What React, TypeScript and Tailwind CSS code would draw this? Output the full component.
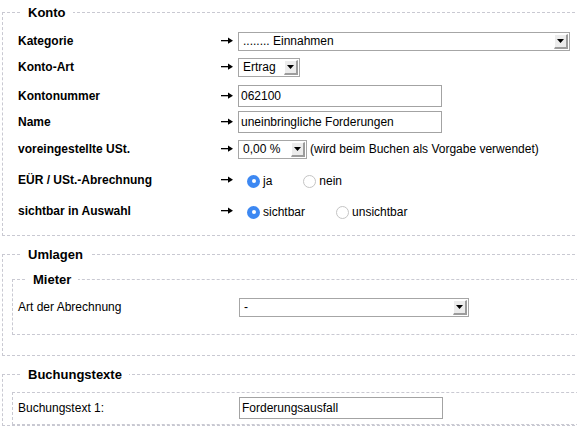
import React from "react";

const font = { fontFamily: '"Liberation Sans", Arial, Helvetica, sans-serif' };

function Arrow() {
  return (
    <svg width="12" height="7" viewBox="0 0 12 7" className="-mt-[1px]">
      <rect x="0" y="3" width="8" height="1.3" fill="#000" />
      <path d="M7 0.6 L12 3.65 L7 6.7 Z" fill="#000" />
    </svg>
  );
}

function SelectBox({ value, widthClass }: { value: string; widthClass: string }) {
  return (
    <div
      className={`flex h-[19px] items-stretch border border-[#a6a6a6] bg-white text-[12px] text-black ${widthClass}`}
    >
      <span className="flex flex-1 items-center overflow-hidden whitespace-nowrap pl-[4px]">{value}</span>
      <span className="my-[1px] mr-[1px] flex w-[14px] items-center justify-center border-b-2 border-l border-r-2 border-t border-b-[#9c9c9c] border-l-white border-r-[#9c9c9c] border-t-white bg-[#ececec]">
        <svg width="7" height="4" viewBox="0 0 7 4">
          <path d="M0 0 H7 L3.5 4 Z" fill="#000" />
        </svg>
      </span>
    </div>
  );
}

function TextBox({ value }: { value: string }) {
  return (
    <div className="flex h-[22px] w-[204px] items-center border border-[#a3a3a3] bg-white pl-[2px] text-[12px] text-black">
      {value}
    </div>
  );
}

function Radio({ checked, label }: { checked: boolean; label: string }) {
  return (
    <span className="mr-[31px] flex items-center gap-[3px] text-[12px]">
      {checked ? (
        <span className="flex h-[13px] w-[13px] items-center justify-center rounded-full bg-[#3d88f2]">
          <span className="h-[4px] w-[4px] rounded-full bg-white" />
        </span>
      ) : (
        <span className="h-[13px] w-[13px] rounded-full border border-[#c4c4c4] bg-white" />
      )}
      {label}
    </span>
  );
}

function Row({ label, h, children }: { label: string; h: string; children: React.ReactNode }) {
  return (
    <div className={`grid grid-cols-[203px_17px_1fr] items-center ${h}`}>
      <span className="text-[12px] font-bold">{label}</span>
      <Arrow />
      <div className="flex items-center">{children}</div>
    </div>
  );
}

const boxCls = "border border-dashed border-[#c9c9d2]";

export default function App() {
  return (
    <div className="h-[429px] w-[577px] overflow-hidden bg-white text-black" style={font}>
      <div className="w-[640px] pl-[2px]">
        {/* Konto */}
        <fieldset className={`${boxCls} mt-[5px] pb-[8px] pl-[15px] pt-[9px]`}>
          <legend className="ml-[3px] px-[7px] text-[13px] font-bold leading-[15px]">Konto</legend>
          <Row label="Kategorie" h="h-[24px]">
            <SelectBox value="........ Einnahmen" widthClass="w-[332px]" />
          </Row>
          <Row label="Konto-Art" h="h-[28px]">
            <SelectBox value="Ertrag" widthClass="w-[62px]" />
          </Row>
          <Row label="Kontonummer" h="h-[30px]">
            <TextBox value="062100" />
          </Row>
          <Row label="Name" h="h-[22px]">
            <TextBox value="uneinbringliche Forderungen" />
          </Row>
          <Row label="voreingestellte USt." h="h-[32px]">
            <SelectBox value="0,00 %" widthClass="w-[69px]" />
            <span className="ml-[3px] whitespace-nowrap text-[12px]">(wird beim Buchen als Vorgabe verwendet)</span>
          </Row>
          <Row label="EÜR / USt.-Abrechnung" h="h-[30px]">
            <div className="flex pl-[9px] pt-[2px]">
              <Radio checked label="ja" />
              <Radio checked={false} label="nein" />
            </div>
          </Row>
          <Row label="sichtbar in Auswahl" h="h-[32px]">
            <div className="flex pl-[9px] pt-[2px]">
              <Radio checked label="sichtbar" />
              <Radio checked={false} label="unsichtbar" />
            </div>
          </Row>
        </fieldset>

        {/* Umlagen */}
        <fieldset className={`${boxCls} mt-[11px] pb-[20px] pl-[9px] pt-[10px]`}>
          <legend className="ml-[9px] px-[7px] text-[13px] font-bold leading-[15px]">Umlagen</legend>
          <fieldset className={`${boxCls} pb-[16px] pl-[5px] pt-[9px]`}>
            <legend className="ml-[8px] px-[7px] text-[13px] font-bold leading-[15px]">Mieter</legend>
            <div className="grid h-[22px] grid-cols-[221px_1fr] items-center">
              <span className="text-[12px]">Art der Abrechnung</span>
              <SelectBox value="-" widthClass="w-[230px]" />
            </div>
          </fieldset>
        </fieldset>

        {/* Buchungstexte */}
        <fieldset className={`${boxCls} mt-[11px] pl-[9px] pt-[10px]`}>
          <legend className="ml-[9px] px-[7px] text-[13px] font-bold leading-[15px]">Buchungstexte</legend>
          <fieldset className={`${boxCls} pb-[5px] pl-[5px] pt-[4px]`}>
            <div className="grid h-[22px] grid-cols-[221px_1fr] items-center">
              <span className="text-[12px]">Buchungstext 1:</span>
              <TextBox value="Forderungsausfall" />
            </div>
          </fieldset>
        </fieldset>
      </div>
    </div>
  );
}
